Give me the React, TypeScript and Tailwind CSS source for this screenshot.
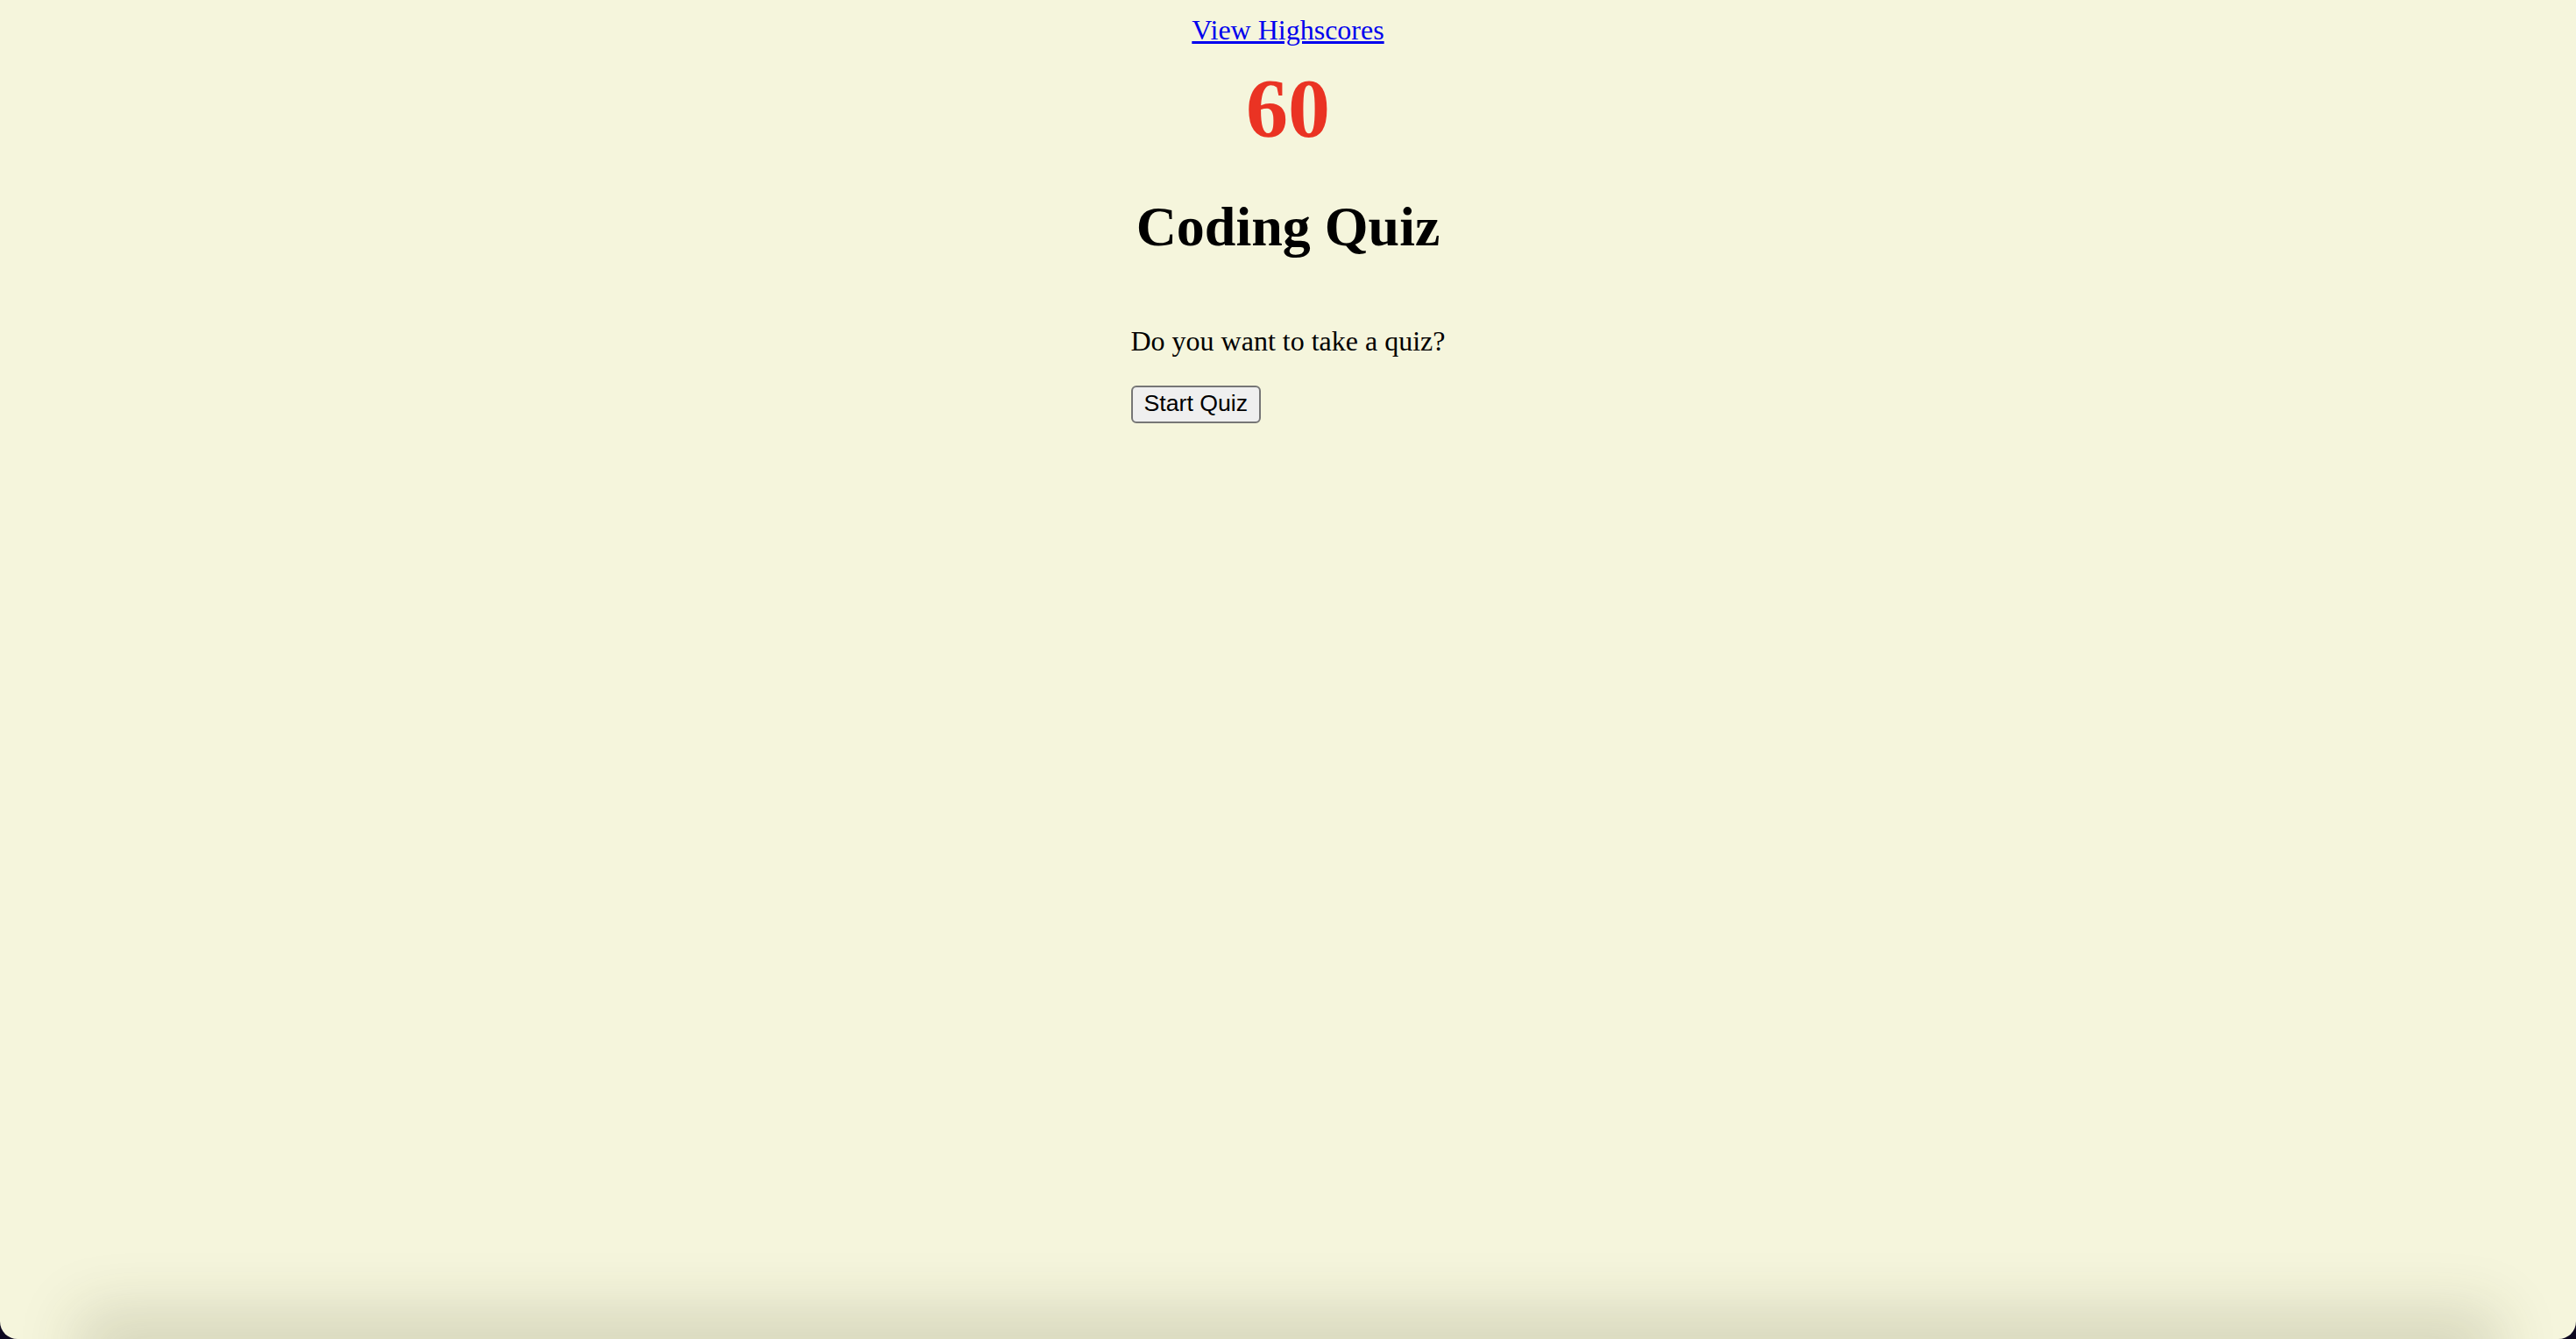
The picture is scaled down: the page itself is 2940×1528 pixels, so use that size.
export default function App() {
  return (
    <div className="min-h-screen bg-[#0d0820]">
      <div className="relative h-screen overflow-hidden rounded-b-[20px] bg-[#f5f5dc] p-4 font-['Liberation_Serif','Times_New_Roman',serif] leading-[normal] text-black">
        {/* Header */}
        <header className="flex flex-col items-center">
          <a href="#" className="text-[32px] leading-[normal] text-[#0000ee] underline">
            View Highscores
          </a>
          <div className="mt-[15px] text-[96px] font-bold leading-[normal] text-[#ea3323]">60</div>
          <h1 className="my-[43px] text-[64px] font-bold leading-[normal]">Coding Quiz</h1>
        </header>

        {/* Quiz */}
        <section className="mx-auto w-fit">
          <p className="my-8 text-[32px] leading-[normal]">Do you want to take a quiz?</p>
          <button className="rounded-[6px] border-2 border-[#767676] bg-[#efefef] px-[13px] pt-[3px] pb-[5px] font-['Liberation_Sans',Arial,sans-serif] text-[26.67px] leading-[normal] text-black">
            Start Quiz
          </button>
        </section>

        {/* Window bottom shadow */}
        <div className="pointer-events-none absolute inset-x-[120px] top-full h-[20px] shadow-[0_0_70px_30px_rgba(60,60,30,0.18)]" />
      </div>
    </div>
  );
}
